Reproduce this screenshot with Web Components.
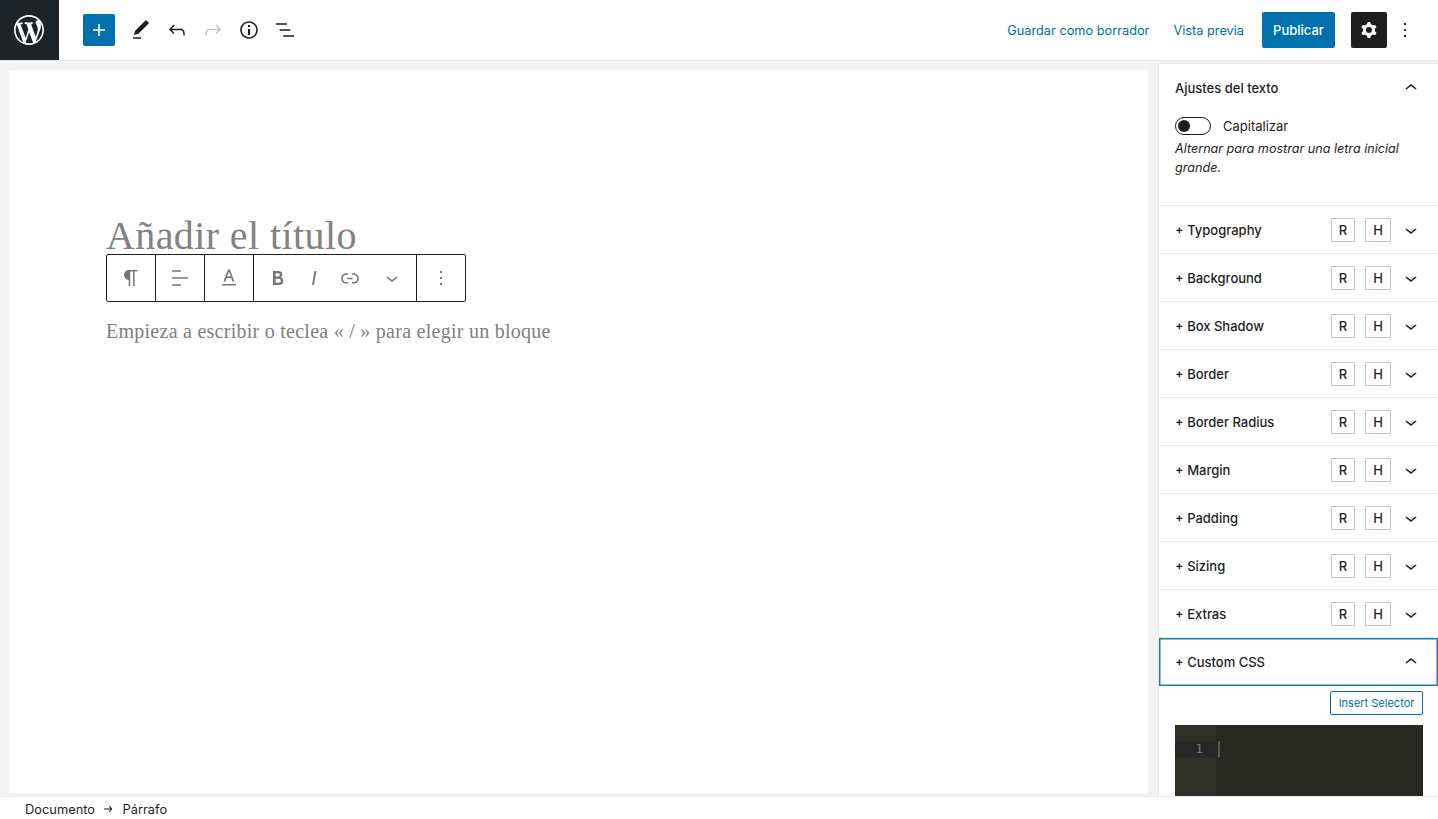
<!DOCTYPE html>
<html lang="es">
<head>
<meta charset="utf-8">
<title>Editor</title>
<style>
    html, body { margin: 0; height: 100%; overflow: hidden; }
    body { font-family: Inter, "Liberation Sans", sans-serif; font-size: 13px; color: #1e1e1e; background: #fff; }
</style>
</head>
<body>
<wp-editor></wp-editor>
<script>
(function() {
    const ICONS = {
        plus: 'M18 11.2h-5.2V6h-1.6v5.2H6v1.6h5.2V18h1.6v-5.2H18z',
        edit: 'M20.1 5.1L16.9 2 6.2 12.7l-1.3 4.4 4.5-1.3L20.1 5.1zM4 20.8h8v-1.5H4v1.5z',
        undo: 'M18.3 11.7c-.6-.6-1.4-.9-2.3-.9H6.7l2.9-3.3-1.1-1-4.5 5L8.5 16l1-1-2.7-2.7H16c.5 0 .9.2 1.3.5 1 1 1 3.4 1 4.5v.3h1.5v-.2c0-1.5 0-4.3-1.5-5.7z',
        redo: 'M15.6 6.5l-1.1 1 2.9 3.3H8c-.9 0-1.7.3-2.3.9-1.4 1.5-1.4 4.2-1.4 5.6v.2h1.5v-.3c0-1.1 0-3.5 1-4.5.3-.3.7-.5 1.3-.5h9.2L14.5 15l1.1 1.1 4.6-4.6-4.6-5z',
        info: 'M12 3.2c-4.8 0-8.8 3.9-8.8 8.8 0 4.8 3.9 8.8 8.8 8.8 4.8 0 8.8-3.9 8.8-8.8 0-4.8-4-8.8-8.8-8.8zm0 16c-4 0-7.2-3.3-7.2-7.2C4.8 8 8 4.8 12 4.8s7.2 3.3 7.2 7.2c0 4-3.2 7.2-7.2 7.2zM11 17h2v-6h-2v6zm0-8h2V7h-2v2z',
        list: 'M13.8 5.2H3v1.5h10.8V5.2zm-3.6 12v1.5H21v-1.5H10.2zm7.2-6H6.6v1.5h10.8v-1.5z',
        cog: 'M10.289 4.836A1 1 0 0111.275 4h1.306a1 1 0 01.987.836l.244 1.466c.787.26 1.503.679 2.108 1.218l1.393-.522a1 1 0 011.216.437l.653 1.13a1 1 0 01-.23 1.273l-1.148.944a6.025 6.025 0 010 2.435l1.149.946a1 1 0 01.23 1.272l-.653 1.13a1 1 0 01-1.216.437l-1.394-.522c-.605.54-1.32.958-2.108 1.218l-.244 1.466a1 1 0 01-.987.836h-1.306a1 1 0 01-.986-.836l-.244-1.466a5.995 5.995 0 01-2.108-1.218l-1.394.522a1 1 0 01-1.217-.436l-.653-1.131a1 1 0 01.23-1.272l1.149-.946a6.026 6.026 0 010-2.435l-1.148-.944a1 1 0 01-.23-1.272l.653-1.131a1 1 0 011.217-.437l1.393.522a5.994 5.994 0 012.108-1.218l.244-1.466zM14.929 12a3 3 0 11-6 0 3 3 0 016 0z',
        more: 'M13 19h-2v-2h2v2zm0-6h-2v-2h2v2zm0-6h-2V5h2v2z',
        up: 'M6.5 12.4L12 8l5.5 4.4-.9 1.2L12 10l-4.5 3.6-1-1.2z',
        down: 'M17.5 11.6L12 16l-5.5-4.4.9-1.2L12 14l4.5-3.6 1 1.2z',
        align: 'M4 19.8h8.9v-1.5H4v1.5zm8.9-15.6H4v1.5h8.9V4.2zm-8.9 7v1.5h16v-1.5H4z',
        bold: 'M14.7 11.3c1-.6 1.5-1.6 1.5-3 0-2.3-1.3-3.4-4-3.4H7v14h5.8c1.4 0 2.5-.3 3.3-1 .8-.7 1.2-1.7 1.2-2.9.1-1.9-.8-3.1-2.6-3.7zm-5.1-4h2.3c.6 0 1.1.1 1.4.4.3.3.5.7.5 1.2s-.2 1-.5 1.2c-.3.3-.8.4-1.4.4H9.6V7.3zm4.6 9c-.4.3-1 .4-1.7.4H9.6v-3.9h2.9c.7 0 1.3.2 1.7.5.4.3.6.8.6 1.5s-.2 1.2-.6 1.5z',
        italic: 'M12.5 5L10 19h1.9l2.5-14z',
        link: 'M15.6 7.2H14v1.5h1.6c2 0 3.7 1.7 3.7 3.7s-1.7 3.7-3.7 3.7H14v1.5h1.6c2.8 0 5.2-2.3 5.2-5.2 0-2.9-2.3-5.2-5.2-5.2zM4.7 12.4c0-2 1.7-3.7 3.7-3.7H10V7.2H8.4c-2.9 0-5.2 2.3-5.2 5.2 0 2.9 2.3 5.2 5.2 5.2H10v-1.5H8.4c-2 0-3.7-1.7-3.7-3.7zm4.6.9h5.3v-1.5H9.3v1.5z',
        para: 'M18.3 4H9.9v-.1l-.9.2c-2.3.4-4 2.4-4 4.8s1.7 4.4 4 4.8l.7.1V20h1.5V5.5h2.9V20h1.5V5.5h2.7V4z',
        color: 'M12.9 3.5h-2l-4.4 12h1.9l1.2-3.4h4.6l1.2 3.4h1.9L12.9 3.5zm-2.7 7.1l1.7-5.3 1.9 5.3h-3.6zM5 18h14v1.6H5z',
        arrow: 'M14.6 7l-1.2 1 2.2 3.2H6v1.6h9.6l-2.2 3.2 1.2 1 3.8-5-3.8-5z'
    };

    class WpIcon extends HTMLElement {
        connectedCallback() {
            const size = this.getAttribute('size') || 24;
            const d = ICONS[this.getAttribute('name')];
            this.attachShadow({ mode: 'open' }).innerHTML = `
            <style>
                :host { display: inline-flex; width: ${size}px; height: ${size}px; flex: none; }
                svg { width: 100%; height: 100%; fill: currentColor; display: block; }
            </style>
            <svg viewBox="0 0 24 24"><path fill-rule="evenodd" d="${d}"/></svg>`;
        }
    }
    customElements.define('wp-icon', WpIcon);

    class WpTopbar extends HTMLElement {
        connectedCallback() {
            this.attachShadow({ mode: 'open' }).innerHTML = `
            <style>
                :host { display: flex; align-items: center; height: 60px; background: #fff; border-bottom: 1px solid #e8e8e8; flex: none; }
                .logo { width: 59px; height: 60px; padding-right: 1px; box-sizing: border-box; background: #1e2327; color: #fff; display: flex; align-items: center; justify-content: center; }
                .logo svg { width: 30px; height: 30px; fill: currentColor; display: block; }
                .left { display: flex; align-items: center; margin-left: 24px; }
                .add { width: 32px; height: 32px; background: #0071ad; color: #fff; border-radius: 2px; display: flex; align-items: center; justify-content: center; margin-right: 8px; }
                .tool { width: 36px; height: 36px; display: flex; align-items: center; justify-content: center; color: #1e1e1e; }
                .tool.off { color: #c6c6c6; }
                .right { margin-left: auto; display: flex; align-items: center; color: #0071a1; padding-right: 15px; }
                .link { margin-right: 24px; white-space: nowrap; font-size: 12.75px; }
                .pub { height: 36px; width: 73px; background: #0071ad; color: #fff; border-radius: 2px; display: flex; align-items: center; justify-content: center; font-weight: 500; margin-right: 16px; box-sizing: border-box; margin-left: -6px; }
                .cog { width: 36px; height: 36px; background: #1e1e1e; color: #fff; border-radius: 2px; display: flex; align-items: center; justify-content: center; }
                .more { width: 36px; height: 36px; color: #1e1e1e; display: flex; align-items: center; justify-content: center; }
            </style>
            <div class="logo"><svg viewBox="0 0 20 20"><path d="M20 10c0-5.51-4.49-10-10-10C4.48 0 0 4.49 0 10c0 5.52 4.48 10 10 10 5.51 0 10-4.48 10-10zM7.78 15.37L4.37 6.22c.55-.02 1.17-.08 1.17-.08.5-.06.44-1.13-.06-1.11 0 0-1.45.11-2.37.11-.18 0-.37 0-.58-.01C4.12 2.69 6.87 1.11 10 1.11c2.33 0 4.45.87 6.05 2.34-.68-.11-1.65.39-1.65 1.58 0 .74.45 1.36.9 2.1.35.61.55 1.36.55 2.46 0 1.49-1.4 5-1.4 5l-3.03-8.37c.54-.02.82-.17.82-.17.5-.05.44-1.25-.06-1.22 0 0-1.44.12-2.38.12-.87 0-2.33-.12-2.33-.12-.5-.03-.56 1.2-.06 1.22l.92.08 1.26 3.41zM17.41 10c.24-.64.74-1.87.43-4.25.7 1.29 1.05 2.71 1.05 4.25 0 3.29-1.73 6.24-4.4 7.78.97-2.59 1.94-5.2 2.92-7.78zM6.1 18.09C3.12 16.65 1.11 13.53 1.11 10c0-1.3.23-2.48.72-3.59C3.25 10.3 4.67 14.2 6.1 18.09zm4.03-6.63l2.58 6.98c-.86.29-1.76.45-2.71.45-.79 0-1.57-.11-2.29-.33.81-2.38 1.62-4.74 2.42-7.1z"/></svg></div>
            <div class="left">
                <div class="add"><wp-icon name="plus"></wp-icon></div>
                <div class="tool"><wp-icon name="edit"></wp-icon></div>
                <div class="tool"><wp-icon name="undo"></wp-icon></div>
                <div class="tool off"><wp-icon name="redo"></wp-icon></div>
                <div class="tool"><wp-icon name="info"></wp-icon></div>
                <div class="tool"><wp-icon name="list"></wp-icon></div>
            </div>
            <div class="right">
                <span class="link">Guardar como borrador</span>
                <span class="link">Vista previa</span>
                <div class="pub">Publicar</div>
                <div class="cog"><wp-icon name="cog"></wp-icon></div>
                <div class="more"><wp-icon name="more"></wp-icon></div>
            </div>`;
        }
    }
    customElements.define('wp-topbar', WpTopbar);

    class WpBlockToolbar extends HTMLElement {
        connectedCallback() {
            this.attachShadow({ mode: 'open' }).innerHTML = `
            <style>
                :host { display: flex; width: 360px; height: 48px; box-sizing: border-box; border: 1px solid #1e1e1e; border-radius: 2px; background: #fff; color: #757575; }
                .group { display: flex; align-items: center; border-right: 1px solid #1e1e1e; width: 49px; box-sizing: border-box; justify-content: center; }
                .group:last-child { border-right: 0; width: 48px; }
                .btn { width: 36px; height: 46px; display: flex; align-items: center; justify-content: center; }
                .mid { width: 163px; padding-left: 6px; justify-content: flex-start; }
                .link { width: 37px; }
                .wide { width: 48px; }
            </style>
            <div class="group"><div class="btn"><wp-icon name="para"></wp-icon></div></div>
            <div class="group"><div class="btn"><wp-icon name="align"></wp-icon></div></div>
            <div class="group"><div class="btn"><wp-icon name="color"></wp-icon></div></div>
            <div class="group mid">
                <div class="btn"><wp-icon name="bold"></wp-icon></div>
                <div class="btn"><wp-icon name="italic"></wp-icon></div>
                <div class="btn link"><wp-icon name="link"></wp-icon></div>
                <div class="btn wide"><wp-icon name="down"></wp-icon></div>
            </div>
            <div class="group"><div class="btn"><wp-icon name="more"></wp-icon></div></div>`;
        }
    }
    customElements.define('wp-block-toolbar', WpBlockToolbar);

    class WpCanvas extends HTMLElement {
        connectedCallback() {
            this.attachShadow({ mode: 'open' }).innerHTML = `
            <style>
                :host { display: block; flex: 1; min-width: 0; background: #f3f3f3; padding: 9px 10px 3px 9px; box-sizing: border-box; }
                .page { background: #fff; height: 100%; padding: 145px 0 0 97px; box-sizing: border-box; }
                h1 { margin: 0; font: 400 40px/42px "Liberation Serif", "DejaVu Serif", serif; letter-spacing: .4px; color: #828282; height: 39px; }
                p { margin: 17px 0 0; font: 400 20px/24px "Liberation Serif", "DejaVu Serif", serif; letter-spacing: .26px; color: #808080; }
            </style>
            <div class="page">
                <h1>Añadir el título</h1>
                <wp-block-toolbar></wp-block-toolbar>
                <p>Empieza a escribir o teclea « / » para elegir un bloque</p>
            </div>`;
        }
    }
    customElements.define('wp-canvas', WpCanvas);

    class WpPanel extends HTMLElement {
        connectedCallback() {
            const open = this.hasAttribute('open');
            const flags = this.hasAttribute('flags');
            this.attachShadow({ mode: 'open' }).innerHTML = `
            <style>
                :host { display: block; border-bottom: 1px solid #e8e8e8; }
                :host([focus]) { border-bottom: 0; }
                .head { height: 47px; display: flex; align-items: center; padding: 0 15px 0 16px; font-weight: 500; color: #1e1e1e; box-sizing: border-box; }
                :host([focus]) .head { height: 48px; box-shadow: inset 0 0 0 1.5px #1b7fae; }
                .title { flex: 1; }
                .flag { height: 24px; box-sizing: border-box; border: 1px solid #c6c6c6; display: flex; align-items: center; justify-content: center; font-size: 13px; font-weight: 500; }
                .r { width: 24px; margin-right: 10px; }
                .h { width: 26px; margin-right: 8px; }
            </style>
            <div class="head">
                <span class="title">${this.getAttribute('label')}</span>
                ${flags ? '<span class="flag r">R</span><span class="flag h">H</span>' : ''}
                <wp-icon name="${open ? 'up' : 'down'}"></wp-icon>
            </div>
            <slot></slot>`;
        }
    }
    customElements.define('wp-panel', WpPanel);

    class WpToggle extends HTMLElement {
        connectedCallback() {
            this.attachShadow({ mode: 'open' }).innerHTML = `
            <style>
                :host { display: block; padding: 6px 16px 0; }
                .row { display: flex; align-items: center; height: 18px; }
                .track { width: 36px; height: 18px; box-sizing: border-box; border: 1px solid #1e1e1e; border-radius: 9px; padding: 2px; margin-right: 12px; }
                .dot { width: 12px; height: 12px; background: #1e1e1e; border-radius: 50%; }
                .help { margin: 4px 0 0; font-style: italic; font-size: 12.6px; line-height: 19px; }
            </style>
            <div class="row"><div class="track"><div class="dot"></div></div><slot></slot></div>
            <p class="help">${this.getAttribute('help')}</p>`;
        }
    }
    customElements.define('wp-toggle', WpToggle);

    class WpCodeBox extends HTMLElement {
        connectedCallback() {
            this.attachShadow({ mode: 'open' }).innerHTML = `
            <style>
                :host { display: block; margin: 0 15px 0 16px; height: 120px; background: #272822; font: 13px/16px "DejaVu Sans Mono", "Liberation Mono", monospace; }
                .wrap { display: flex; height: 100%; }
                .gutter { width: 41px; background: #2f3129; padding-top: 16px; box-sizing: border-box; }
                .num { height: 16px; background: #272727; text-align: right; padding-right: 13px; color: #77786f; }
                .line { flex: 1; padding: 16px 0 0 2px; }
                .caret { width: 2px; height: 16px; background: #5a5a55; }
            </style>
            <div class="wrap"><div class="gutter"><div class="num">1</div></div><div class="line"><div class="caret"></div></div></div>`;
        }
    }
    customElements.define('wp-code-box', WpCodeBox);

    class WpSidebar extends HTMLElement {
        connectedCallback() {
            const names = ['Typography', 'Background', 'Box Shadow', 'Border', 'Border Radius', 'Margin', 'Padding', 'Sizing', 'Extras'];
            this.attachShadow({ mode: 'open' }).innerHTML = `
            <style>
                :host { display: block; width: 280px; flex: none; background: #fff; border-left: 1px solid #e8e8e8; overflow: hidden; box-sizing: border-box; border-top: 1px solid #e8e8e8; margin-top: 2px; height: calc(100% - 2px); }
                .first { border-bottom: 1px solid #e8e8e8; height: 142px; box-sizing: border-box; }
                .first wp-panel { border-bottom: 0; }
                .actions { display: flex; justify-content: flex-end; padding: 5px 15px 10px 0; }
                .insert { height: 24px; width: 93px; box-sizing: border-box; border: 1px solid #0071a1; color: #0071a1; border-radius: 2px; font-size: 11px; display: flex; align-items: center; justify-content: center; background: #fff; }
            </style>
            <div class="first">
                <wp-panel label="Ajustes del texto" open>
                    <wp-toggle help="Alternar para mostrar una letra inicial grande.">Capitalizar</wp-toggle>
                </wp-panel>
            </div>
            ${names.map(n => `<wp-panel label="+ ${n}" flags></wp-panel>`).join('')}
            <wp-panel label="+ Custom CSS" open focus></wp-panel>
            <div class="actions"><div class="insert">Insert Selector</div></div>
            <wp-code-box></wp-code-box>`;
        }
    }
    customElements.define('wp-sidebar', WpSidebar);

    class WpFooter extends HTMLElement {
        connectedCallback() {
            this.attachShadow({ mode: 'open' }).innerHTML = `
            <style>
                :host { display: flex; align-items: center; height: 23px; flex: none; box-sizing: border-box; border-top: 1px solid #e8e8e8; background: #fff; padding: 2px 0 0 25px; font-size: 12.85px; color: #1e1e1e; z-index: 1; }
                wp-icon { margin: 0 6.5px 0 5px; }
            </style>
            <span>Documento</span><wp-icon name="arrow" size="16"></wp-icon><span>Párrafo</span>`;
        }
    }
    customElements.define('wp-footer', WpFooter);

    class WpEditor extends HTMLElement {
        connectedCallback() {
            this.attachShadow({ mode: 'open' }).innerHTML = `
            <style>
                :host { display: flex; flex-direction: column; height: 819px; }
                .main { flex: 1; min-height: 0; display: flex; background: #f3f3f3; }
            </style>
            <wp-topbar></wp-topbar>
            <div class="main"><wp-canvas></wp-canvas><wp-sidebar></wp-sidebar></div>
            <wp-footer></wp-footer>`;
        }
    }
    customElements.define('wp-editor', WpEditor);
})();
</script>
</body>
</html>
